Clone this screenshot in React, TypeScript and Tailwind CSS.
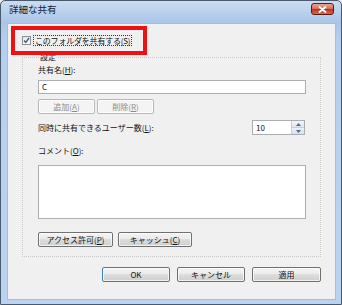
import React from "react";

const font = "font-['Noto_Sans_CJK_JP','Noto_Sans',sans-serif]";

function Btn({
  children,
  w,
  disabled,
  def,
}: {
  children: React.ReactNode;
  w: string;
  disabled?: boolean;
  def?: boolean;
}) {
  const border = disabled
    ? "border-[#b5b9bc]"
    : def
    ? "border-[#3c7fb1]"
    : "border-[#707070]";
  const bg = disabled
    ? "bg-[#f4f4f4]"
    : "bg-[linear-gradient(to_bottom,#f4f4f4_0%,#ebebeb_45%,#dddddd_50%,#cfcfcf_100%)]";
  return (
    <div
      className={`${w} h-[15px] rounded-[2px] border ${border} ${bg} flex items-center justify-center text-[8px] leading-none ${
        disabled ? "text-[#8a8a8a]" : "text-[#111]"
      } shadow-[inset_0_0_0_1px_rgba(255,255,255,0.7)]`}
    >
      {children}
    </div>
  );
}

export default function App() {
  return (
    <div className={`w-[342px] h-[305px] ${font} bg-[#f0f0f0]`}>
      <div className="w-[342px] h-[305px] border border-[#4a5a6e] rounded-t-[5px] bg-[linear-gradient(to_bottom,#cbdcf0_0px,#a9c5e8_22px,#b7cfee_40px,#bcd3f0_100%)] flex flex-col">
        {/* title bar */}
        <div className="h-[22px] flex items-center pl-[8px] pr-[7px] shrink-0">
          <span className="text-[9.5px] leading-none text-[#16202e] mt-[-4px]">詳細な共有</span>
          <div className="ml-auto mt-[-6px] w-[23px] h-[12px] rounded-[3px] border border-[#5a1a12] bg-[linear-gradient(to_bottom,#eaa796_0%,#d5705c_45%,#c1351f_55%,#d7684f_100%)] flex items-center justify-center">
            <svg width="9" height="7" viewBox="0 0 9 7">
              <path d="M1.5 1 L7.5 6 M7.5 1 L1.5 6" stroke="#ffffff" strokeWidth="1.8" strokeLinecap="round" />
            </svg>
          </div>
        </div>
        {/* client */}
        <div className="relative mx-[5px] ml-[6px] mb-[4px] flex-1 bg-[#f0f0f0] border border-[#a9bcd4] flex flex-col pl-[14px] text-[#111]">
          {/* checkbox row */}
          <div className="mt-[10px] h-[12px] flex items-center">
            <div className="w-[9px] h-[9px] border border-[#8e8f8f] bg-[linear-gradient(to_bottom,#e6e6e6,#ffffff)] flex items-center justify-center">
              <svg width="7" height="7" viewBox="0 0 7 7">
                <path d="M1 3.5 L2.8 5.5 L6 1" stroke="#3d568f" strokeWidth="1.3" fill="none" />
              </svg>
            </div>
            <span className="ml-[2px] border border-dotted border-[#333] px-[1px] text-[8px] leading-[9px] tracking-[-0.2px]">
              このフォルダを共有する(S)
            </span>
          </div>
          {/* group */}
          <fieldset className="mt-[6px] w-[299px] border border-dotted border-[#c7c9cc] pl-[15px] pb-[9px] m-0">
            <legend className="ml-[1px] px-[1px] text-[8px] leading-[10px]">設定</legend>
            <div className="mt-[3px] text-[8px] leading-[10px]">
              共有名(<span className="underline">H</span>):
            </div>
            <div className="mt-[5px] w-[268px] h-[14px] border border-[#abadb3] bg-white flex items-center pl-[3px] text-[8px] leading-none">
              C
            </div>
            <div className="mt-[5px] flex gap-[2px]">
              <Btn w="w-[57px]" disabled>
                追加(<span className="underline">A</span>)
              </Btn>
              <Btn w="w-[57px]" disabled>
                削除(<span className="underline">R</span>)
              </Btn>
            </div>
            <div className="mt-[6px] h-[15px] flex items-center w-[268px]">
              <span className="text-[8px] leading-none">
                同時に共有できるユーザー数(<span className="underline">L</span>):
              </span>
              <div className="ml-auto mr-[1px] flex h-[15px] border border-[#abadb3] bg-white">
                <div className="w-[38px] flex items-center pl-[3px] text-[8px] leading-none">10</div>
                <div className="w-[13px] flex flex-col border-l border-[#c8cfd8]">
                  <div className="flex-1 flex items-center justify-center bg-[linear-gradient(to_bottom,#f4f6f9,#dfe5ec)] border-b border-[#c8cfd8]">
                    <svg width="5" height="3" viewBox="0 0 5 3">
                      <path d="M0 3 L2.5 0 L5 3 Z" fill="#4b6a9a" />
                    </svg>
                  </div>
                  <div className="flex-1 flex items-center justify-center bg-[linear-gradient(to_bottom,#eef1f5,#d9e0e8)]">
                    <svg width="5" height="3" viewBox="0 0 5 3">
                      <path d="M0 0 L2.5 3 L5 0 Z" fill="#4b6a9a" />
                    </svg>
                  </div>
                </div>
              </div>
            </div>
            <div className="mt-[11px] text-[8px] leading-[10px]">
              コメント(<span className="underline">O</span>):
            </div>
            <div className="mt-[9px] w-[268px] h-[54px] border border-[#abadb3] bg-white" />
            <div className="mt-[13px] flex gap-[5px]">
              <Btn w="w-[75px]">
                アクセス許可(<span className="underline">P</span>)
              </Btn>
              <Btn w="w-[74px]">
                キャッシュ(<span className="underline">C</span>)
              </Btn>
            </div>
          </fieldset>
          {/* bottom buttons */}
          <div className="mt-[10px] w-[299px] flex justify-end gap-[7px]">
            <Btn w="w-[68px]" def>
              OK
            </Btn>
            <Btn w="w-[68px]">キャンセル</Btn>
            <Btn w="w-[69px]">適用</Btn>
          </div>
          {/* red annotation */}
          <div className="absolute left-[3px] top-[2px] w-[136px] h-[29px] border-[4px] border-[#ee1111]" />
        </div>
      </div>
    </div>
  );
}
